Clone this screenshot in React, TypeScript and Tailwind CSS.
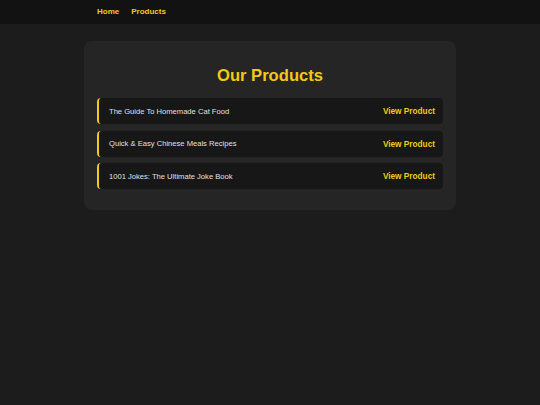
const products = [
  'The Guide To Homemade Cat Food',
  'Quick & Easy Chinese Meals Recipes',
  '1001 Jokes: The Ultimate Joke Book',
]

export default function App() {
  return (
    <div className="min-h-[405px] bg-[#1c1c1c] font-['Liberation_Sans',Arial,sans-serif]">
      <nav className="h-[24px] bg-[#121212]">
        <div className="mx-auto flex h-full w-[372px] items-center gap-[12px] px-[13px]">
          <a className="text-[8px] font-bold text-[#f2c916]">Home</a>
          <a className="text-[8px] font-bold text-[#f2c916]">Products</a>
        </div>
      </nav>

      <main className="mx-auto mt-[17px] w-[372px] rounded-[8px] bg-[#252525] px-[13px] pt-[25px] pb-[21px]">
        <h1 className="mb-[12px] text-center text-[16.6px] leading-[20px] font-bold text-[#f2c916]">Our Products</h1>
        <div className="flex flex-col gap-[6.5px]">
          {products.map((p) => (
            <div
              key={p}
              className="flex h-[26px] items-center justify-between rounded-[4px] border-l-2 border-[#f2c916] bg-[#171717] pt-[1px] pr-[8px] pl-[10px]"
            >
              <span className="text-[7.6px] leading-[10px] text-[#e0e0e0]">{p}</span>
              <span className="pt-[1px] text-[8.25px] leading-[10px] font-bold text-[#f2c916]">View Product</span>
            </div>
          ))}
        </div>
      </main>
    </div>
  )
}
